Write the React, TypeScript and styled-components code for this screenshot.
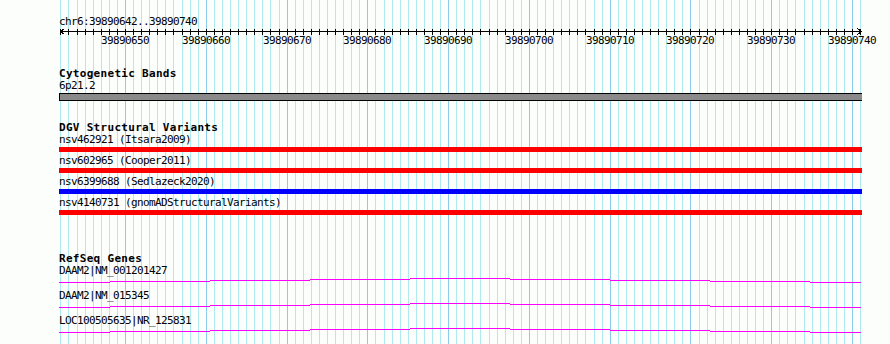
import React from "react";
import styled, { createGlobalStyle } from "styled-components";

const GlobalStyle = createGlobalStyle`
  html, body { margin: 0; padding: 0; background: #fcfefc; }
  #root { width: 890px; height: 344px; }
`;

const START = 39890642;
const ORIGIN = 59;
const TRACK_WIDTH = 803;
const GRID_X0 = 60.4;
const GRID_STEP = 8.078;
const GRID_COUNT = 100;
const gridX = (i: number) => Math.round(GRID_X0 + i * GRID_STEP);
const isMajor = (i: number) => i >= 8 && (i - 8) % 10 === 0;
const baseAt = (i: number) => START + i;

const Page = styled.div`
  position: relative;
  width: 890px;
  height: 344px;
  overflow: hidden;
  background: #fcfefc;
  font-family: "DejaVu Sans Mono", "Liberation Mono", monospace;
  font-size: 11px;
  letter-spacing: -0.62px;
  color: #000;
`;

const GridLayer = styled.svg`
  position: absolute;
  left: 0;
  top: 0;
  width: 890px;
  height: 344px;
  pointer-events: none;
`;

const Tracks = styled.div`
  position: relative;
  display: flex;
  flex-direction: column;
  width: ${TRACK_WIDTH}px;
  padding: 16px 0 0 ${ORIGIN}px;
`;

const PositionLabel = styled.div`
  height: 12px;
  line-height: 12px;
  white-space: pre;
`;

const RulerDrawing = styled.svg`
  display: block;
  width: ${TRACK_WIDTH}px;
  height: 7px;
`;

const TickLabels = styled.div`
  position: relative;
  height: 12px;
`;

const TickLabel = styled.span`
  position: absolute;
  top: 0;
  width: 48px;
  text-align: center;
  line-height: 12px;
`;

const Track = styled.section<{ $gap: number }>`
  display: flex;
  flex-direction: column;
  margin-top: ${(p) => p.$gap}px;
`;

const TrackTitle = styled.div`
  height: 12px;
  line-height: 12px;
  font-weight: bold;
  letter-spacing: 0.3px;
  white-space: pre;
`;

const FeatureLabel = styled.div`
  height: 12px;
  line-height: 12px;
  white-space: pre;
`;

const BandBar = styled.div`
  box-sizing: border-box;
  margin-top: 1px;
  width: ${TRACK_WIDTH}px;
  height: 8px;
  background: #8a8a8a;
  border-top: 1px solid #000;
  border-bottom: 1px solid #000;
  border-left: 1px solid #000;
`;

const FeatureRow = styled.div`
  display: flex;
  flex-direction: column;
  height: 21px;
`;

const FeatureBar = styled.div<{ $color: string }>`
  margin-top: 1px;
  width: ${TRACK_WIDTH}px;
  height: 5px;
  background: ${(p) => p.$color};
`;

const GeneRow = styled.div`
  display: flex;
  flex-direction: column;
  height: 25px;
`;

const GeneLine = styled.svg`
  display: block;
  width: ${TRACK_WIDTH}px;
  height: 13px;
`;

const variants = [
  { label: "nsv462921 (Itsara2009)", color: "#ff0000" },
  { label: "nsv602965 (Cooper2011)", color: "#ff0000" },
  { label: "nsv6399688 (Sedlazeck2020)", color: "#0000ff" },
  { label: "nsv4140731 (gnomADStructuralVariants)", color: "#ff0000" },
];

const genes = ["DAAM2|NM_001201427", "DAAM2|NM_015345", "LOC100505635|NR_125831"];

// stepped intron line profile: x boundaries (relative to origin) and level offsets
const steps = [0, 51, 151, 251, 351, 451, 551, 651, 751, 802];
const levels = [0, -1, -2, -3, -4, -3, -2, -1, 0];

const genePath = () => {
  const base = 5.5;
  let d = "";
  for (let s = 0; s < levels.length; s++) {
    const y = base + levels[s];
    d += `M${steps[s]} ${y}H${steps[s + 1]}`;
  }
  return d;
};

const Grid: React.FC = () => (
  <GridLayer viewBox="0 0 890 344" shapeRendering="crispEdges">
    {Array.from({ length: GRID_COUNT }, (_, i) => (
      <line
        key={i}
        x1={gridX(i) + 0.5}
        x2={gridX(i) + 0.5}
        y1={0}
        y2={344}
        stroke={isMajor(i) ? "#8ccbee" : "#aeeaee"}
        strokeWidth={1}
      />
    ))}
  </GridLayer>
);

const Ruler: React.FC = () => (
  <RulerDrawing viewBox={`0 0 ${TRACK_WIDTH} 7`} shapeRendering="crispEdges">
    <line x1={1} x2={802} y1={3.5} y2={3.5} stroke="#000" />
    {Array.from({ length: GRID_COUNT }, (_, i) => (
      <line
        key={i}
        x1={gridX(i) - ORIGIN + 0.5}
        x2={gridX(i) - ORIGIN + 0.5}
        y1={0.5}
        y2={6.5}
        stroke="#000"
      />
    ))}
    <polyline points="5.5,0.5 1.5,3.5 5.5,6.5" fill="none" stroke="#000" />
    <polyline points="798.5,0.5 802.5,3.5 798.5,6.5" fill="none" stroke="#000" />
  </RulerDrawing>
);

export default function App() {
  const majors = Array.from({ length: GRID_COUNT }, (_, i) => i).filter(isMajor);
  return (
    <>
      <GlobalStyle />
      <Page>
        <Grid />
        <Tracks>
          <PositionLabel>chr6:39890642..39890740</PositionLabel>
          <Ruler />
          <TickLabels>
            {majors.map((i) => (
              <TickLabel key={i} style={{ left: gridX(i) - ORIGIN - 24 }}>
                {baseAt(i)}
              </TickLabel>
            ))}
          </TickLabels>

          <Track $gap={21}>
            <TrackTitle>Cytogenetic Bands</TrackTitle>
            <FeatureLabel>6p21.2</FeatureLabel>
            <BandBar />
          </Track>

          <Track $gap={21}>
            <TrackTitle>DGV Structural Variants</TrackTitle>
            {variants.map((v) => (
              <FeatureRow key={v.label}>
                <FeatureLabel>{v.label}</FeatureLabel>
                <FeatureBar $color={v.color} />
              </FeatureRow>
            ))}
          </Track>

          <Track $gap={35}>
            <TrackTitle>RefSeq Genes</TrackTitle>
            {genes.map((g) => (
              <GeneRow key={g}>
                <FeatureLabel>{g}</FeatureLabel>
                <GeneLine viewBox={`0 0 ${TRACK_WIDTH} 13`} shapeRendering="crispEdges">
                  <path d={genePath()} stroke="#ff00ff" strokeWidth={1} fill="none" />
                </GeneLine>
              </GeneRow>
            ))}
          </Track>
        </Tracks>
      </Page>
    </>
  );
}
